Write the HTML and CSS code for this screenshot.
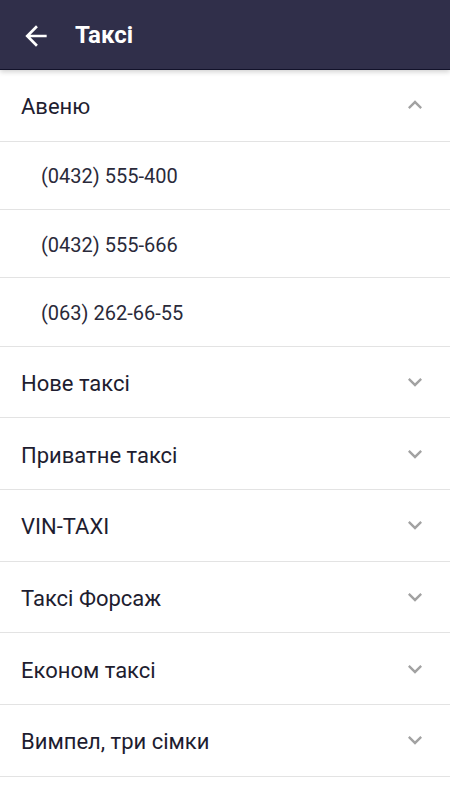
FILE: index.html
```html
<!DOCTYPE html>
<html>
<head>
<meta charset="utf-8">
<title>Таксі</title>
<link rel="stylesheet" href="styles.css">
</head>
<body>
<div class="toolbar">
    <svg class="back" viewBox="0 0 24 24"><path d="M20 11H7.83l5.59-5.59L12 4l-8 8 8 8 1.41-1.41L7.83 13H20v-2z"/></svg>
    <span class="title">Таксі</span>
</div>
<div class="list">
    <div class="group open">
        <div class="row">
            <span class="name">Авеню</span>
            <svg class="chevron" viewBox="0 0 24 24"><path d="M12 8l-6 6 1.41 1.41L12 10.83l4.59 4.58L18 14z"/></svg>
        </div>
        <div class="phone">(0432) 555-400</div>
        <div class="phone">(0432) 555-666</div>
        <div class="phone">(063) 262-66-55</div>
    </div>
    <div class="group">
        <div class="row">
            <span class="name">Нове таксі</span>
            <svg class="chevron" viewBox="0 0 24 24"><path d="M16.59 8.59L12 13.17 7.41 8.59 6 10l6 6 6-6z"/></svg>
        </div>
    </div>
    <div class="group">
        <div class="row">
            <span class="name">Приватне таксі</span>
            <svg class="chevron" viewBox="0 0 24 24"><path d="M16.59 8.59L12 13.17 7.41 8.59 6 10l6 6 6-6z"/></svg>
        </div>
    </div>
    <div class="group">
        <div class="row">
            <span class="name">VIN-TAXI</span>
            <svg class="chevron" viewBox="0 0 24 24"><path d="M16.59 8.59L12 13.17 7.41 8.59 6 10l6 6 6-6z"/></svg>
        </div>
    </div>
    <div class="group">
        <div class="row">
            <span class="name">Таксі Форсаж</span>
            <svg class="chevron" viewBox="0 0 24 24"><path d="M16.59 8.59L12 13.17 7.41 8.59 6 10l6 6 6-6z"/></svg>
        </div>
    </div>
    <div class="group">
        <div class="row">
            <span class="name">Економ таксі</span>
            <svg class="chevron" viewBox="0 0 24 24"><path d="M16.59 8.59L12 13.17 7.41 8.59 6 10l6 6 6-6z"/></svg>
        </div>
    </div>
    <div class="group">
        <div class="row">
            <span class="name">Вимпел, три сімки</span>
            <svg class="chevron" viewBox="0 0 24 24"><path d="M16.59 8.59L12 13.17 7.41 8.59 6 10l6 6 6-6z"/></svg>
        </div>
    </div>
</div>
</body>
</html>
```

FILE: styles.css
```css
body {
    margin: 0;
    background-color: #ffffff;
    font-family: Roboto, "Noto Sans", sans-serif;
    color: #1e1d30;
}
.toolbar {
    height: 69px;
    background-color: #302f4a;
    border-bottom: 1px solid #12122a;
    display: flex;
    align-items: center;
    position: relative;
    z-index: 1;
    box-shadow: 0 2px 5px rgba(0, 0, 0, 0.18);
}
.back {
    width: 32px;
    height: 32px;
    fill: #ffffff;
    margin-left: 20px;
    margin-top: 2px;
}
.title {
    color: #ffffff;
    font-size: 24px;
    font-weight: bold;
    margin-left: 23px;
}
.row {
    height: 71.67px;
    box-sizing: border-box;
    border-bottom: 1px solid #e3e3e3;
    display: flex;
    align-items: center;
    justify-content: space-between;
    padding: 3px 21px 0 21px;
}
.name {
    font-size: 22px;
}
.chevron {
    width: 28px;
    height: 28px;
    fill: #a2a2a2;
    margin-top: -3px;
}
.phone {
    height: 68.33px;
    box-sizing: border-box;
    border-bottom: 1px solid #e3e3e3;
    display: flex;
    align-items: center;
    padding: 2px 0 0 41px;
    font-size: 20px;
    color: #2a2a3a;
}
```
